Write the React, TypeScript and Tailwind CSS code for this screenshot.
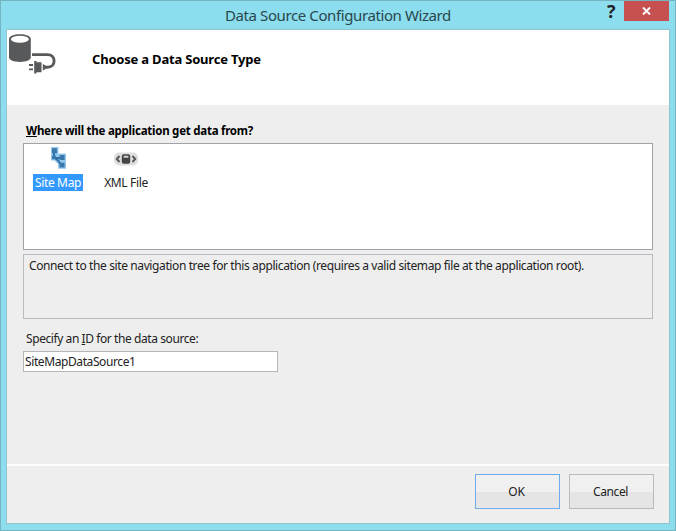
function DatabasePlugIcon() {
  return (
    <svg width="48" height="42" viewBox="0 0 48 42" className="block">
      <path d="M0 5C0 2 5 .2 10.900 .2s10.900 1.800 10.900 4.800v18.200c0 2.900-5 4.700-10.900 4.700S0 26.100 0 23.200z" fill="#58595b" />
      <ellipse cx="10.900" cy="5.300" rx="9" ry="3.500" fill="#fff" />
      <path d="M23 20.600H38.500C47.300 20.600 47.300 33.300 38.500 33.300H36" fill="none" stroke="#58595b" strokeWidth="2.900" />
      <path d="M20 31h4M20 35.300h4" stroke="#58595b" strokeWidth="1.800" />
      <path d="M25.200 27h2.300v1.200h5v10h-5v1.200h-2.300zM33.800 30l2.800 1.600v3.400l-2.800 1.600z" fill="#58595b" />
    </svg>
  );
}

function SiteMapIcon() {
  return (
    <svg width="18" height="24" viewBox="0 0 18 24" className="block">
      <path d="M2 1h7.500v6.500H17v15.200H9V18L5.500 14.500H2z" fill="#94c7ee" />
      <path d="M5 7v4l4 3.500 3 4M7 12h5" fill="none" stroke="#2f6fa6" strokeWidth="2" />
      <path d="M3 2.200h5v5H3zM3 9.800h4v3.400H3zM10.600 9h5v5h-5zM10.600 16.800h5v4.800h-5z" fill="#3a78ab" />
    </svg>
  );
}

function XmlIcon() {
  return (
    <svg width="24" height="14" viewBox="0 0 24 14" className="block">
      <rect x="0" y=".5" width="24" height="13" rx="5" fill="#dedede" />
      <path d="M5.500 4L2.800 7l2.700 3M18.500 4l2.700 3-2.700 3" fill="none" stroke="#555" strokeWidth="1.900" />
      <rect x="7.800" y="2.200" width="8.400" height="9.600" rx="2" fill="#454545" />
      <rect x="9.500" y="3.800" width="5" height="2" rx=".7" fill="#d2d2d2" />
    </svg>
  );
}

export default function App() {
  return (
    <div className="flex h-[531px] w-[676px] flex-col overflow-hidden border border-[#75b3c0] bg-[#8cdeee] px-[5px] pb-[6px] font-['Noto_Sans',sans-serif] text-xs text-[#222]">
      <header className="flex h-[28px] shrink-0 items-start pl-[219px]">
        <h1 className="w-[228px] pt-[2px] text-[15px] leading-6 tracking-[-0.400px] whitespace-nowrap text-[#29474d]">Data Source Configuration Wizard</h1>
        <span className="ml-[151px] w-[20px] pl-[3px] font-['Open_Sans',sans-serif] text-[18px] leading-[21px] font-bold text-[#222]">?</span>
        <button className="flex h-[20px] w-[45px] shrink-0 items-center justify-center bg-[#c75050]" aria-label="Close">
          <svg width="9" height="8" viewBox="0 0 9 8"><path d="M1 .5l7 7M8 .5l-7 7" stroke="#fff" strokeWidth="1.900" /></svg>
        </button>
      </header>
      <div className="flex min-h-0 flex-1 flex-col border border-[#91c4cd] bg-[#eee]">
        <section className="flex h-[75px] shrink-0 bg-white pt-[4px] pl-[2px]">
          <DatabasePlugIcon />
          <h2 className="mt-[15px] ml-[35px] text-[13px] leading-5 font-bold tracking-[-0.200px] whitespace-nowrap text-black">Choose a Data Source Type</h2>
        </section>
        <main className="flex h-[359px] shrink-0 flex-col items-start pt-[17px] pl-[16px]">
          <label className="ml-[3px] h-[21px] text-[11.500px] leading-[18px] font-bold tracking-[-0.250px] whitespace-nowrap text-black"><span className="underline">W</span>here will the application get data from?</label>
          <div className="flex h-[107px] w-[630px] border border-[#a0a2a9] bg-white pt-[2px]">
            <div className="flex w-[68px] flex-col items-center">
              <div className="flex h-[28px]"><SiteMapIcon /></div>
              <span className="h-[17px] bg-[#3399ff] px-[1.500px] text-xs leading-[17px] tracking-[-0.350px] whitespace-nowrap text-white">Site Map</span>
            </div>
            <div className="flex w-[68px] flex-col items-center">
              <div className="flex h-[28px] pt-[6px]"><XmlIcon /></div>
              <span className="h-[17px] text-xs leading-[17px] tracking-[-0.350px] whitespace-nowrap">XML File</span>
            </div>
          </div>
          <div className="mt-[4px] h-[65px] w-[630px] border border-[#b9b9c0] pt-[2px] pl-[5px] text-xs leading-[18px] tracking-[-0.390px] whitespace-nowrap">Connect to the site navigation tree for this application (requires a valid sitemap file at the application root).</div>
          <label className="mt-[11px] ml-[3px] h-[21px] text-xs leading-[18px] tracking-[-0.420px] whitespace-nowrap">Specify an <span className="underline">I</span>D for the data source:</label>
          <input defaultValue="SiteMapDataSource1" className="h-[21px] w-[255px] border border-[#b5b5bd] bg-white px-[1px] text-xs tracking-[-0.400px] outline-none" />
        </main>
        <footer className="flex flex-1 justify-end gap-[9px] border-t-2 border-white pt-[8px] pr-[15px]">
          <button className="h-[35px] w-[85px] border border-[#6baceb] bg-linear-to-b from-[#f0f0f0] from-50% to-[#e5e5e5] to-50% pr-[2px] text-xs tracking-[-0.200px]">OK</button>
          <button className="h-[35px] w-[85px] border border-[#b9bbb9] bg-linear-to-b from-[#f0f0f0] from-50% to-[#e5e5e5] to-50% pr-[2px] text-xs tracking-[-0.400px]">Cancel</button>
        </footer>
      </div>
    </div>
  );
}
